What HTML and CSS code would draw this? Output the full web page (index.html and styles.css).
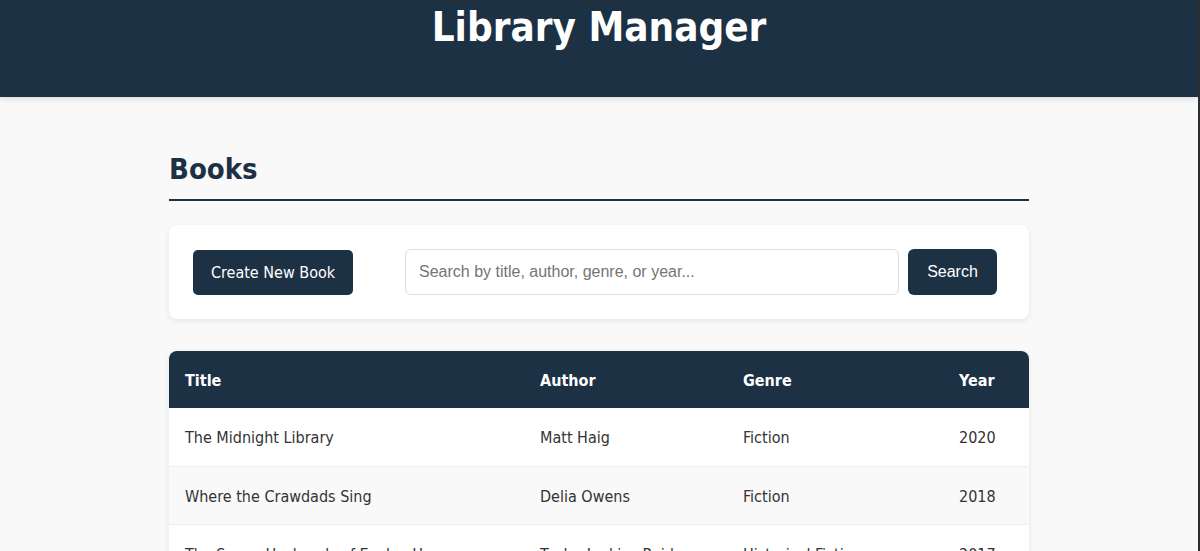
FILE: index.html
```html
<!DOCTYPE html>
<html lang="en">
<head>
<meta charset="utf-8">
<title>Library Manager</title>
<link rel="stylesheet" href="styles.css">
</head>
<body>
<header class="site-header">
  <h1 class="site-title">Library Manager</h1>
</header>
<main class="container">
  <h2 class="page-title">Books</h2>
  <div class="toolbar">
    <button class="btn btn-create">Create New Book</button>
    <form class="search-form">
      <input class="search-input" type="text" placeholder="Search by title, author, genre, or year...">
      <button class="btn btn-search" type="button">Search</button>
    </form>
  </div>
  <table class="books">
    <colgroup>
      <col class="c-title"><col class="c-author"><col class="c-genre"><col class="c-year">
    </colgroup>
    <thead>
      <tr><th>Title</th><th>Author</th><th>Genre</th><th>Year</th></tr>
    </thead>
    <tbody>
      <tr><td>The Midnight Library</td><td>Matt Haig</td><td>Fiction</td><td>2020</td></tr>
      <tr><td>Where the Crawdads Sing</td><td>Delia Owens</td><td>Fiction</td><td>2018</td></tr>
      <tr><td>The Seven Husbands of Evelyn Hugo</td><td>Taylor Jenkins Reid</td><td>Historical Fiction</td><td>2017</td></tr>
    </tbody>
  </table>
</main>
<div class="frame-edge"></div>
</body>
</html>
```
FILE: styles.css
```css
* { box-sizing: border-box; }
html, body { margin: 0; padding: 0; }
body {
  background: #f9f9f9;
  font-family: Tahoma, "DejaVu Sans Condensed", "DejaVu Sans", sans-serif;
  color: #333;
  border-top: 1px solid #2a2e33;
  padding-right: 2px;
}
.site-header {
  background: #1d3144;
  height: 96px;
  box-shadow: 0 2px 6px rgba(0,0,0,0.12);
}
.site-title {
  margin: 0;
  padding-top: 2px;
  text-align: center;
  color: #fff;
  font-size: 40px;
  line-height: 48px;
  font-weight: bold;
}
.container {
  width: 860px;
  margin: 0 auto;
  padding-top: 52px;
}
.page-title {
  margin: 0;
  color: #1d3144;
  font-size: 29px;
  line-height: 40px;
  padding-bottom: 10px;
  border-bottom: 2px solid #1d3144;
}
.toolbar {
  margin-top: 24px;
  background: #fff;
  border-radius: 8px;
  box-shadow: 0 2px 6px rgba(0,0,0,0.08);
  padding: 24px 32px 24px 24px;
  display: flex;
  align-items: center;
  justify-content: space-between;
}
.btn {
  background: #1d3144;
  color: #fff;
  border: none;
  border-radius: 5px;
  font-size: 16px;
  cursor: pointer;
}
.btn-create {
  width: 160px;
  height: 45px;
  font-family: Tahoma, "DejaVu Sans Condensed", "DejaVu Sans", sans-serif;
}
.search-form {
  display: flex;
  gap: 9px;
  width: 592px;
}
.search-input {
  flex: 1;
  height: 46px;
  border: 1px solid #ddd;
  border-radius: 6px;
  padding: 0 13px;
  font-family: "Liberation Sans", Arial, sans-serif;
  font-size: 16px;
  color: #333;
}
.search-input::placeholder { color: #757575; }
.btn-search {
  width: 89px;
  height: 46px;
  border-radius: 6px;
  font-family: "Liberation Sans", Arial, sans-serif;
}
.books {
  margin-top: 32px;
  width: 100%;
  border-collapse: collapse;
  table-layout: fixed;
  background: #fff;
  border-radius: 8px;
  overflow: hidden;
  box-shadow: 0 2px 6px rgba(0,0,0,0.08);
}
.c-title { width: 355px; }
.c-author { width: 203px; }
.c-genre { width: 216px; }
.c-year { width: 86px; }
.books th {
  background: #1d3144;
  color: #fff;
  text-align: left;
  font-weight: bold;
  font-size: 16px;
  height: 57px;
  padding: 2px 16px 0;
}
.books td {
  font-size: 16px;
  height: 58px;
  padding: 2px 16px 0;
  border-bottom: 1px solid #eee;
  color: #333;
  white-space: nowrap;
}
.books tbody tr:nth-child(even) td { background: #f9f9f9; }
.frame-edge {
  position: fixed;
  top: 0;
  right: 0;
  width: 2px;
  height: 100%;
  background: #2a2e33;
}
```
